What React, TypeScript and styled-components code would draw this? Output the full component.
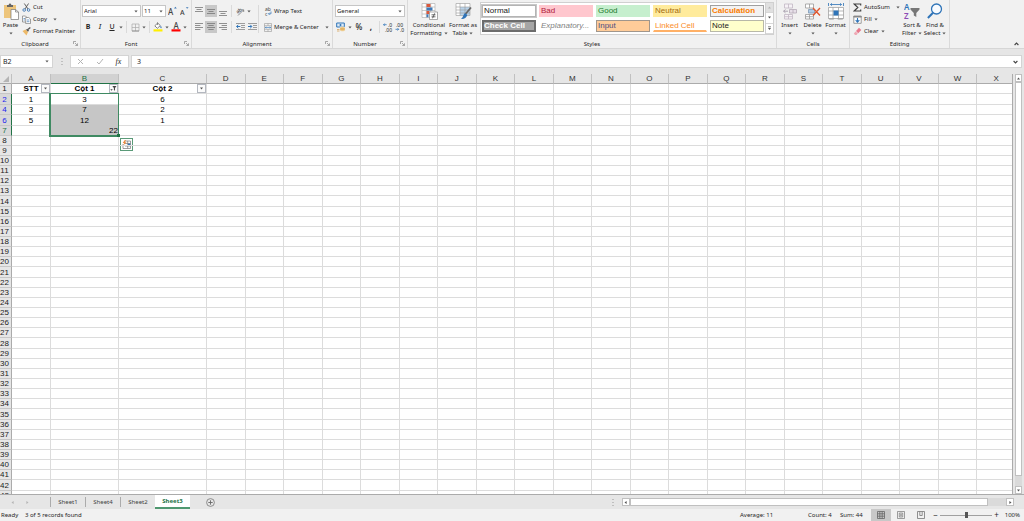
import React from "react";
import styled, { createGlobalStyle, css } from "styled-components";

const UI = `"Noto Sans", "Open Sans", sans-serif`;
const CELL = `"Liberation Sans", Arial, sans-serif`;
const GREEN = "#217346";

const GlobalStyle = createGlobalStyle`
  *, *::before, *::after { box-sizing: border-box; }
  body { margin: 0; background: #e6e6e6; }
  button, input, select { margin: 0; padding: 0; border: 0; background: none; color: inherit; font: inherit; outline: none; }
  svg { display: block; flex: none; }
`;

const Window = styled.main`
  display: flex;
  flex-direction: column;
  height: 100vh;
  overflow: hidden;
  background: #e6e6e6;
  color: #262626;
  font: 6px/8px ${UI};
  white-space: nowrap;
`;

/* ---------- ribbon ---------- */

const Ribbon = styled.header`
  display: flex;
  flex: none;
  background: #f1f1f1;
  border-bottom: 1px solid #d6d6d6;
`;

const GroupBox = styled.section<{ $width: number }>`
  display: flex;
  flex-direction: column;
  flex: none;
  width: ${(p) => p.$width}px;
  border-right: 1px solid #dadada;
`;

const GroupBody = styled.div<{ $pad: number }>`
  display: flex;
  align-items: flex-start;
  height: 39px;
  padding-left: ${(p) => p.$pad}px;
`;

const GroupFooter = styled.div`
  display: flex;
  align-items: center;
  height: 9px;
`;

const GroupTitle = styled.span`
  flex: 1;
  text-align: center;
`;

const Launcher = styled.button`
  display: grid;
  place-items: center;
  width: 10px;
  height: 8px;
`;

const BigButton = styled.button<{ $width: number }>`
  display: flex;
  flex-direction: column;
  align-items: center;
  flex: none;
  width: ${(p) => p.$width}px;
  padding-top: 3px;
  line-height: 8px;
  svg + span { margin-top: 1px; }
`;

const BigLine = styled.span`
  display: flex;
  align-items: center;
  justify-content: center;
  gap: 2px;
  height: 8px;
`;

const ActionList = styled.div<{ $width: number }>`
  display: flex;
  flex-direction: column;
  flex: none;
  width: ${(p) => p.$width}px;
  padding: 1px 0 0 2px;
`;

const Action = styled.button<{ $spread?: boolean }>`
  display: flex;
  align-items: center;
  gap: ${(p) => (p.$spread ? 6 : 2)}px;
  height: 12px;
`;

const ActionLabel = styled.span`
  display: flex;
  align-items: center;
  gap: 2px;
`;

const ToolRows = styled.div`
  display: flex;
  flex-direction: column;
  gap: 4px;
  padding-top: 5px;
`;

const ToolRow = styled.div`
  display: flex;
  align-items: center;
  height: 12px;
`;

const Tool = styled.button<{ $active?: boolean; $large?: boolean }>`
  display: grid;
  place-items: center;
  width: 12px;
  height: 12px;
  background: ${(p) => (p.$active ? "#c8c8c8" : "transparent")};
  font-size: ${(p) => (p.$large ? 8 : 7)}px;
  font-weight: 500;
`;

const CaretTool = styled.button`
  display: grid;
  place-items: center;
  width: 6px;
  height: 12px;
`;

const TextTool = styled.button<{ $gap: number }>`
  display: flex;
  align-items: center;
  gap: ${(p) => p.$gap}px;
  height: 12px;
`;

const Divider = styled.span<{ $tall?: boolean }>`
  flex: none;
  width: 1px;
  height: ${(p) => (p.$tall ? 28 : 12)}px;
  margin: ${(p) => (p.$tall ? "5px 5px 0 0" : "0 2px")};
  background: #dadada;
`;

const ComboBox = styled.label<{ $width: number }>`
  display: flex;
  align-items: center;
  width: ${(p) => p.$width}px;
  height: 12px;
  margin-right: 1px;
  padding-right: 2px;
  border: 1px solid #c6c6c6;
  background: #fff;
`;

const ComboSelect = styled.select`
  flex: 1;
  min-width: 0;
  height: 10px;
  padding-left: 1px;
  appearance: none;
  line-height: 10px;
`;

const Gallery = styled.div`
  display: flex;
  height: 33px;
  margin: 2px 0 0 1px;
  border: 1px solid #d0d0d0;
  background: #fff;
`;

const Swatches = styled.div`
  display: grid;
  grid-template-columns: repeat(5, 54px);
  grid-auto-rows: 12px;
  gap: 3px;
  padding: 2px 1px;
`;

type SwatchKind = "normal" | "bad" | "good" | "neutral" | "calc" | "check" | "explain" | "input" | "linked" | "note";

const swatchStyles: Record<SwatchKind, ReturnType<typeof css>> = {
  normal: css`color: #222; border-color: #b4b4b4; outline: 1px solid #c8c8c8;`,
  bad: css`color: #b0203a; background: #ffc7ce;`,
  good: css`color: #1c7a2c; background: #c6efce;`,
  neutral: css`color: #a36a10; background: #ffeb9c;`,
  calc: css`color: #fa7d00; background: #f2f2f2; border-color: #a0a0a0; font-weight: 700;`,
  check: css`color: #fff; background: #a5a5a5; border: 2px solid #6c6c6c; font-weight: 700; padding-left: 0; line-height: 8px;`,
  explain: css`color: #7f7f7f; font-style: italic;`,
  input: css`color: #4d4d80; background: #ffcc99; border-color: #a0968c;`,
  linked: css`color: #fa8c28; border-bottom: 2px solid #ffb066;`,
  note: css`color: #222; background: #ffffcc; border-color: #b8b8a8;`,
};

const Swatch = styled.button<{ $kind: SwatchKind }>`
  padding-left: 1px;
  border: 1px solid transparent;
  font: 8px/10px ${CELL};
  text-align: left;
  ${(p) => swatchStyles[p.$kind]}
`;

const GalleryScroll = styled.div`
  display: grid;
  grid-template-rows: repeat(3, 1fr);
  width: 8px;
  border-left: 1px solid #d0d0d0;
`;

const GalleryStep = styled.button<{ $dim?: boolean }>`
  display: grid;
  place-items: center;
  background: ${(p) => (p.$dim ? "#e0e0e0" : "#fff")};
  border-bottom: 1px solid #d8d8d8;
`;

const CollapseRibbon = styled.button`
  align-self: flex-end;
  margin: 0 5px 2px auto;
`;

/* ---------- formula bar ---------- */

const FormulaRow = styled.div`
  display: flex;
  align-items: center;
  flex: none;
  padding: 6px 2px 6px 0;
`;

const Field = styled.label<{ $width?: number }>`
  display: flex;
  align-items: center;
  flex: ${(p) => (p.$width ? "none" : 1)};
  width: ${(p) => (p.$width ? `${p.$width}px` : "auto")};
  height: 13px;
  padding: 0 3px 0 2px;
  border: 1px solid #d4d4d4;
  background: #fff;
  font-size: 7px;
`;

const FieldInput = styled.input<{ $indent?: boolean }>`
  flex: 1;
  min-width: 0;
  height: 11px;
  padding-left: ${(p) => (p.$indent ? 3 : 0)}px;
`;

const Grip = styled.span`
  display: grid;
  place-items: center;
  width: 17px;
`;

const EntryButtons = styled.div`
  display: flex;
  justify-content: space-around;
  align-items: center;
  width: 59px;
  height: 13px;
  margin-right: 2px;
  border: 1px solid #d4d4d4;
  background: #fff;
`;

const EntryButton = styled.button`
  display: grid;
  place-items: center;
  width: 14px;
  height: 11px;
  font: italic 400 8px/10px "Liberation Serif", serif;
`;

/* ---------- worksheet ---------- */

const SheetArea = styled.div`
  display: flex;
  flex: 1;
  min-height: 0;
`;

const GridView = styled.div`
  flex: 1;
  min-width: 0;
  overflow: hidden;
  background: #fff;
  border-right: 1px solid #ababab;
`;

const Grid = styled.table`
  width: calc(100% + 4px);
  table-layout: fixed;
  border-collapse: separate;
  border-spacing: 0;
  font: 8px/8px ${CELL};
  color: #000;
`;

const Col = styled.col<{ $width?: number }>`
  width: ${(p) => (p.$width ? `${p.$width}px` : "auto")};
`;

const ColHead = styled.th<{ $selected?: boolean }>`
  height: 10px;
  padding: 1px 0 0;
  background: ${(p) => (p.$selected ? "#d2d2d2" : "#e6e6e6")};
  border-right: 1px solid #c0c0c0;
  border-bottom: 1px solid ${(p) => (p.$selected ? GREEN : "#ababab")};
  color: ${(p) => (p.$selected ? GREEN : "#303030")};
  font-weight: 400;
`;

const Corner = styled.td`
  padding: 0 2px 0 0;
  background: #e6e6e6;
  border-right: 1px solid #c0c0c0;
  border-bottom: 1px solid #ababab;
  svg { margin-left: auto; }
`;

const Row = styled.tr<{ $tall: boolean }>`
  height: ${(p) => (p.$tall ? 11 : 10)}px;
`;

const RowHead = styled.th<{ $selected: boolean; $filtered: boolean }>`
  padding: 1px 2px 0 0;
  background: ${(p) => (p.$selected ? "#d8d8d8" : "#e6e6e6")};
  border-right: 1px solid ${(p) => (p.$selected ? GREEN : "#ababab")};
  border-bottom: 1px solid #c6c6c6;
  color: ${(p) => (p.$filtered ? "#2222ee" : p.$selected ? GREEN : "#222")};
  font-weight: 400;
`;

const Cell = styled.td<{ $bold?: boolean; $right?: boolean; $shaded?: boolean }>`
  position: relative;
  padding: 1px 0 0;
  border-right: 1px solid #dcdcdc;
  border-bottom: 1px solid #dcdcdc;
  background: ${(p) => (p.$shaded ? "#c6c6c6" : "transparent")};
  ${(p) => p.$shaded && "border-color: #c6c6c6;"}
  font-weight: ${(p) => (p.$bold ? 700 : 400)};
  text-align: ${(p) => (p.$right ? "right" : "center")};
`;

const FilterButton = styled.button`
  position: absolute;
  right: 0;
  bottom: 0;
  display: grid;
  place-items: center;
  width: 9px;
  height: 9px;
  border: 1px solid #b4b8c0;
  background: #fbfbfb;
`;

const Selection = styled.div`
  position: absolute;
  z-index: 1;
  top: -1px;
  left: -2px;
  right: -1px;
  height: 44px;
  border: 2px solid #3f8a62;
  border-top-width: 1px;
  border-right-width: 1px;
  pointer-events: none;
  &::after {
    content: "";
    position: absolute;
    right: -2px;
    bottom: -2px;
    width: 3px;
    height: 3px;
    background: ${GREEN};
  }
`;

const QuickAnalysis = styled.button`
  position: absolute;
  top: 44px;
  left: 69px;
  display: grid;
  place-items: center;
  width: 13px;
  height: 13px;
  border: 1px solid #5a9a78;
  background: #fff;
`;

const VScroll = styled.div`
  display: flex;
  flex-direction: column;
  width: 7px;
  margin: 0 2px;
  background: #dadada;
`;

const HScroll = styled.div`
  display: flex;
  align-items: stretch;
  width: calc(38% + 3px);
  height: 8px;
  margin-right: 10px;
  background: #dadada;
`;

const ScrollArrow = styled.button`
  display: grid;
  place-items: center;
  flex: none;
  width: 8px;
  height: 8px;
  border: 1px solid #c0c0c0;
  background: #fff;
  ${VScroll} & { width: 7px; }
`;

const ScrollThumb = styled.div<{ $gap: number }>`
  flex: 1;
  border: 1px solid #c0c0c0;
  background: #fff;
  ${HScroll} & { margin-right: ${(p) => p.$gap}px; }
  ${VScroll} & { margin-bottom: ${(p) => p.$gap}px; }
`;

/* ---------- tabs and status ---------- */

const TabBar = styled.nav`
  display: flex;
  align-items: center;
  flex: none;
  height: 15px;
  border-top: 1px solid #ababab;
`;

const TabArrows = styled.div`
  display: flex;
  gap: 10px;
  width: 50px;
  padding-left: 10px;
`;

const Tab = styled.button<{ $active: boolean }>`
  width: 35px;
  height: 10px;
  border-left: 1px solid #ababab;
  color: #444;
  ${(p) =>
    p.$active &&
    css`
      align-self: flex-start;
      height: 14px;
      border-left: 0;
      border-bottom: 2px solid #4f9870;
      background: #fff;
      color: ${GREEN};
      font-weight: 700;
    `}
`;

const NewSheet = styled.button`
  margin: 0 auto 0 16px;
`;

const StatusBar = styled.footer`
  display: flex;
  align-items: center;
  flex: none;
  height: 12px;
  padding: 0 4px 0 1px;
  background: #f1f1f1;
`;

const Status = styled.span<{ $width: number }>`
  width: ${(p) => p.$width}px;
`;

const StatusRight = styled.div`
  display: flex;
  align-items: center;
  margin-left: auto;
`;

const ViewButton = styled.button<{ $active?: boolean }>`
  display: grid;
  place-items: center;
  width: 20px;
  height: 12px;
  background: ${(p) => (p.$active ? "#c8c8c8" : "transparent")};
`;

const ZoomStep = styled.button`
  width: 9px;
  font-size: 8px;
`;

const ZoomSlider = styled.input`
  width: 52px;
  height: 8px;
  appearance: none;
  background: linear-gradient(#a0a0a0, #a0a0a0) center / 100% 1px no-repeat;
  &::-webkit-slider-thumb {
    appearance: none;
    width: 3px;
    height: 6px;
    background: #555;
  }
`;

const ZoomValue = styled.span`
  width: 19px;
  text-align: right;
`;

/* ---------- icons ---------- */

type IconProps = { w: number; h?: number; children: React.ReactNode };
const Icon = ({ w, h = w, children }: IconProps) => (
  <svg width={w} height={h} viewBox={`0 0 ${w} ${h}`} fill="none" aria-hidden="true">
    {children}
  </svg>
);

const Caret = () => <Icon w={4} h={3}><path d="M.4 .5h3.2L2 2.4z" fill="#555" /></Icon>;
const Chevron = ({ up }: { up?: boolean }) => (
  <Icon w={5} h={4}><path d={up ? "M.6 3 2.5 1 4.4 3" : "M.6 1 2.5 3 4.4 1"} stroke="#444" strokeWidth="1.1" /></Icon>
);

const PasteIcon = () => (
  <Icon w={16} h={17}>
    <path d="M1 2h12v13H1z" fill="#edc57c" />
    <path d="M4 4V2h1.700C5.700 0 8.300 0 8.300 2H10v2z" fill="#666" />
    <path d="M8 6.500h4.500L15.500 9v7.500H8z" fill="#fff" stroke="#777" strokeWidth=".7" />
    <path d="M12.500 6.500V9h3" stroke="#777" strokeWidth=".7" />
  </Icon>
);
const CutIcon = () => (
  <Icon w={9}>
    <path d="M2.300 .5 6 6M6.500 .5 3 6" stroke="#555" strokeWidth=".9" />
    <circle cx="2.200" cy="7" r="1.300" stroke="#3f78b5" strokeWidth=".9" />
    <circle cx="6.600" cy="7" r="1.300" stroke="#3f78b5" strokeWidth=".9" />
  </Icon>
);
const CopyIcon = () => (
  <Icon w={9}>
    <path d="M.5 1h3l1.500 1.500V7H.5z" fill="#fff" stroke="#777" strokeWidth=".7" />
    <path d="M3.700 2.500h3L8.500 4v4.600H3.700z" fill="#fff" stroke="#777" strokeWidth=".7" />
    <path d="M1.500 3.500h1.500M1.500 5h1.500M4.800 5h2.600M4.800 6.700h2.600" stroke="#3f78b5" strokeWidth=".7" />
  </Icon>
);
const BrushIcon = () => (
  <Icon w={9}>
    <path d="M.5 4 3.500 2.500 6 5 4.500 8.500z" fill="#edb968" />
    <path d="M4 2.800 5.300 1.700 7 3.400 6 4.800z" fill="#555" />
    <path d="M6 2.600 8.300.5" stroke="#555" strokeWidth="1.300" />
  </Icon>
);
const LaunchIcon = () => (
  <Icon w={5}>
    <path d="M.5 3V.5H3M2 2l2.300 2.300M4.500 2.300v2.200H2.300" stroke="#777" strokeWidth=".6" />
  </Icon>
);
const GrowIcon = ({ shrink }: { shrink?: boolean }) => (
  <Icon w={10}>
    <text x="0" y="9" fontFamily="Noto Sans" fontSize={shrink ? 7 : 8} fontWeight="500" fill="#444">A</text>
    <path d={shrink ? "M5.800 1.200h2.800L7.200 2.800z" : "M6 2.600h2.800L7.400 .8z"} fill="#3f78b5" />
  </Icon>
);
const BordersIcon = () => (
  <Icon w={9}>
    <path d="M1 1h7v7H1zM4.500 1v7M1 4.500h7" stroke="#aaa" strokeWidth=".7" />
    <path d="M1 8h7" stroke="#888" strokeWidth=".8" />
  </Icon>
);
const FillColorIcon = () => (
  <Icon w={10}>
    <path d="M1.800 3.800 4.700 1 7.300 3.600 4.300 6.300z" fill="#fff" stroke="#666" strokeWidth=".8" />
    <path d="M4.500 3V.5" stroke="#666" strokeWidth=".7" />
    <path d="M7.700 3.500c1 1.500 1.300 2.700.4 2.700s-.9-1.200-.4-2.700" fill="#3f78b5" />
    <path d="M.5 7.300h9v2.200h-9z" fill="#ffef00" />
  </Icon>
);
const FontColorIcon = () => (
  <Icon w={10}>
    <text x="2.500" y="6.500" fontFamily="Noto Sans" fontSize="8" fontWeight="500" fill="#444">A</text>
    <path d="M.5 7.300h9v2.200h-9z" fill="#f00" />
  </Icon>
);
const VAlignIcon = ({ top }: { top: number }) => (
  <Icon w={8} h={10}>
    <path d={`M0 ${top + 0.5}h8M1.500 ${top + 2.5}h5M0 ${top + 4.5}h8`} stroke="#777" strokeWidth=".8" />
  </Icon>
);
const HAlignIcon = ({ side }: { side: 0 | 1 | 2 }) => (
  <Icon w={8} h={8}>
    <path d={`M0 .5h8M${side * 1.3} 2.500h5.400M0 4.500h8M${side * 1.3} 6.500h5.400`} stroke="#777" strokeWidth=".8" />
  </Icon>
);
const OrientIcon = () => (
  <Icon w={10}>
    <text x="1" y="7" fontFamily="Noto Sans" fontSize="5" fill="#444" transform="rotate(-35 3 5)">ab</text>
    <path d="M3 9.500 8.500 4M6.500 3.800h2.200v2.200" stroke="#777" strokeWidth=".8" />
  </Icon>
);
const IndentIcon = ({ out }: { out?: boolean }) => (
  <Icon w={9} h={8}>
    <path d="M0 .5h9M5 2.500h4M5 4.500h4M0 6.500h9" stroke="#888" strokeWidth=".8" />
    <path d={out ? "M4.300 3.500H.7M2.300 1.800.6 3.500l1.700 1.700" : "M0 3.500h3.600M2.200 1.800l1.700 1.700-1.700 1.700"} stroke="#2f74b8" strokeWidth="1" />
  </Icon>
);
const WrapIcon = () => (
  <Icon w={8} h={9}>
    <text x="1" y="4.200" fontFamily="Noto Sans" fontSize="5" fill="#444">ab</text>
    <text x="1" y="8.500" fontFamily="Noto Sans" fontSize="5" fill="#444">c</text>
    <path d="M7 4.500v2.300H4.600M5.600 5.700 4.500 6.800l1.100 1.100" stroke="#2f74b8" strokeWidth=".7" />
  </Icon>
);
const MergeIcon = () => (
  <Icon w={8} h={9}>
    <path d="M.5.5h7v8h-7zM.5 2.700h7M.5 6.300h7M4 .5v2.200M4 6.300v2.200" stroke="#999" strokeWidth=".6" />
    <path d="M1.300 4.500h5.400M2.300 3.700l-1 .8 1 .8M5.700 3.700l1 .8-1 .8" stroke="#2f74b8" strokeWidth=".6" />
  </Icon>
);
const CurrencyIcon = () => (
  <Icon w={10}>
    <path d="M.7 1h7.600v4H.7z" fill="#dbe9f6" stroke="#2f74b8" strokeWidth="1" />
    <circle cx="4.500" cy="3" r="1" fill="#2f74b8" />
    <path d="M4 5.500c0-1 5-1 5 0v3c0 1-5 1-5 0z" fill="#edc57c" stroke="#f1f1f1" strokeWidth=".5" />
    <path d="M1 7.500h2.500M1 9h2.500M4 7h5" stroke="#d29a45" strokeWidth=".7" />
  </Icon>
);
const DecimalIcon = ({ more }: { more?: boolean }) => (
  <Icon w={10} h={10}>
    <path d={more ? "M3.600 2.700H.6M1.700 1.500.5 2.700l1.200 1.200" : "M.5 7.300h3M2.500 6.100l1.200 1.200-1.200 1.200"} stroke="#2f74b8" strokeWidth=".8" />
    <text x={more ? 5 : 1} y="4.700" fontFamily="Noto Sans" fontSize="5" fill="#555">{more ? ".0" : ".00"}</text>
    <text x={more ? 2 : 5} y="9.500" fontFamily="Noto Sans" fontSize="5" fill="#555">{more ? ".00" : ".0"}</text>
  </Icon>
);
const ConditionalIcon = () => (
  <Icon w={17}>
    <path d="M1 .5h13v14H1zM1 4h13M1 7.500h13M1 11h13M5.300.5v14M9.700.5v14" fill="#fff" stroke="#a8a8a8" strokeWidth=".6" />
    <path d="M5.500 1h4v3h-4zM5.500 8h3v3h-3z" fill="#d9573b" />
    <path d="M5.500 4.500h6v3h-6zM5.500 11.300h2v3h-2z" fill="#3f78b5" />
    <path d="M8.500 9h8v7.500h-8z" fill="#fff" stroke="#777" strokeWidth=".6" />
    <path d="M10.500 11.800h4M10.500 13.800h4M13.700 10.300l-2.200 5" stroke="#333" strokeWidth=".7" />
  </Icon>
);
const FormatTableIcon = () => (
  <Icon w={17}>
    <path d="M1 .5h14v12H1z" fill="#fff" />
    <path d="M5 4h10v8.500H5z" fill="#b9d3ea" />
    <path d="M1 .5h14v12H1zM1 4h14M1 7h14M1 10h14M5 .5v12M10 .5v12" stroke="#999" strokeWidth=".6" />
    <path d="M16 4.500 10.500 11" stroke="#666" strokeWidth="1.800" />
    <path d="M10 10l2.300 2c-1 3-3 4.300-6.300 4 2-1 2-4.500 4-6z" fill="#2f74b8" />
  </Icon>
);
const InsertIcon = () => (
  <Icon w={16} h={17}>
    <path d="M2.500 1h8v4h-8zM6.500 1v4M2.500 11.500h8v4.500h-8zM6.500 11.500V16M2.500 13.700h8" fill="#f6f2f6" stroke="#c2b8c4" strokeWidth=".8" />
    <path d="M7.500 6.500h7v3.500h-7zM11 6.500V10" fill="#e6dfe8" stroke="#b5a9b8" strokeWidth=".8" />
    <path d="M6 8.200H1.500M3.500 6.500 1.600 8.200l1.900 1.700" stroke="#a79dad" strokeWidth=".9" />
  </Icon>
);
const DeleteIcon = () => (
  <Icon w={17}>
    <path d="M1.500 1h8v4h-8zM5.500 1v4M1.500 11.500h8V16h-8zM5.500 11.500V16M1.500 13.700h8" fill="#fff" stroke="#999" strokeWidth=".8" />
    <path d="M4.500 6.500h6V10h-6z" fill="#aecbe6" stroke="#7d99b5" strokeWidth=".8" />
    <path d="M9 5l7 7.500M16 5 9 12.500" stroke="#e0572f" strokeWidth="1.400" />
  </Icon>
);
const FormatIcon = () => (
  <Icon w={16} h={17}>
    <path d="M2.500 1.500h11M4 .3 2.500 1.500 4 2.700M12 .3l1.500 1.200L12 2.700M.5 0v3M15.500 0v3" stroke="#2f74b8" strokeWidth=".8" />
    <path d="M.5 4.500h15v11H.5zM.5 8h15M.5 12h15M5 4.500v11M10.500 4.500v11" fill="#fff" stroke="#999" strokeWidth=".7" />
    <path d="M5.500 7.500h5v5h-5z" fill="#2f74b8" />
    <path d="M.5 15.500h6l-1 1h-4zM9 15.500h6.500l-1 1H10z" fill="#999" />
  </Icon>
);
const SigmaIcon = () => (
  <Icon w={9}><path d="M7.700 2.500V1H1.200L4.800 4.500 1.200 8h6.500V6.500" stroke="#444" strokeWidth="1.200" /></Icon>
);
const FillIcon = () => (
  <Icon w={9}>
    <path d="M.8 1h7.400v7.300H.8z" fill="#fff" stroke="#777" strokeWidth=".7" />
    <path d="M.5 1h8v1.500h-8z" fill="#888" />
    <path d="M4.500 3v4M2.700 5.200l1.800 1.900 1.800-1.900" stroke="#2f74b8" strokeWidth="1.100" />
  </Icon>
);
const EraserIcon = () => (
  <Icon w={9}>
    <path d="M3 4 6 .8 8.300 3 5.200 6.200z" fill="#e8788c" />
    <path d="M2.600 4.400 4.800 6.600 3.500 8H2L.8 6.500z" fill="#efa9b5" />
  </Icon>
);
const SortIcon = () => (
  <Icon w={16} h={17}>
    <text x="0" y="7" fontFamily="Noto Sans" fontSize="8" fontWeight="600" fill="#2f74b8">A</text>
    <text x="0" y="16" fontFamily="Noto Sans" fontSize="8" fontWeight="600" fill="#8d4bb5">Z</text>
    <path d="M6.500 5h9v1.500L12.300 10v4l-2.500-1.500V10L6.500 6.500z" fill="#777" />
  </Icon>
);
const FindIcon = () => (
  <Icon w={16} h={17}>
    <circle cx="9.500" cy="6" r="5" fill="#f8fbff" stroke="#2f74b8" strokeWidth="1.300" />
    <path d="M6 9.700.9 15" stroke="#2f74b8" strokeWidth="2" />
  </Icon>
);
const QuickIcon = () => (
  <Icon w={9}>
    <path d="M3 1h5.500v7.500H1V4" fill="#fff" stroke="#777" strokeWidth=".7" />
    <path d="M3 3.500h5.500M3 6h5.500M5.700 1v7.500" stroke="#777" strokeWidth=".7" />
    <path d="M6 3.700h2.300v2H6z" fill="#2f74b8" />
    <path d="M2.800 0 .7 3h1.500L1 5.800 4.500 2.200H2.800L4 0z" fill="#eb8a3c" />
  </Icon>
);
const FunnelIcon = () => (
  <Icon w={7}><path d="M2.300 1h4.200L5 3v2.800L3.900 5V3z" fill="#444" /><path d="M.3 4.300h2.400L1.500 5.700z" fill="#444" /></Icon>
);
const Triangle = ({ turn, dim }: { turn: number; dim?: boolean }) => (
  <Icon w={5}><path d="M1 3.600h3L2.500 1.500z" fill={dim ? "#b5b5b5" : "#555"} transform={`rotate(${turn} 2.500 2.500)`} /></Icon>
);
const Dots = () => (
  <Icon w={2} h={7}><path d="M0.500 .5h1M.5 3.500h1M.5 6.500h1" stroke="#999" /></Icon>
);

/* ---------- pieces ---------- */

const Group = ({ title, width, pad = 1, launcher, children }: {
  title: string; width: number; pad?: number; launcher?: boolean; children: React.ReactNode;
}) => (
  <GroupBox $width={width} aria-label={title}>
    <GroupBody $pad={pad}>{children}</GroupBody>
    <GroupFooter>
      <GroupTitle>{title}</GroupTitle>
      {launcher && <Launcher aria-label={`${title} settings`}><LaunchIcon /></Launcher>}
    </GroupFooter>
  </GroupBox>
);

const Combo = ({ label, value, width }: { label: string; value: string; width: number }) => (
  <ComboBox $width={width}>
    <ComboSelect aria-label={label} defaultValue={value}><option>{value}</option></ComboSelect>
    <Caret />
  </ComboBox>
);

const Drop = ({ label }: { label: string }) => <CaretTool aria-label={label}><Caret /></CaretTool>;

const swatches: [SwatchKind, string][] = [
  ["normal", "Normal"], ["bad", "Bad"], ["good", "Good"], ["neutral", "Neutral"], ["calc", "Calculation"],
  ["check", "Check Cell"], ["explain", "Explanatory..."], ["input", "Input"], ["linked", "Linked Cell"], ["note", "Note"],
];

const columns = "ABCDEFGHIJKLMNOPQRSTUVWX".split("");
const fixedWidths: Record<string, number> = { A: 39, B: 68, C: 88 };
const rowNumbers = [1, 2, 4, 6, ...Array.from({ length: 37 }, (_, i) => i + 7)];
const data: Record<string, string> = {
  A1: "STT", B1: "Cột 1", C1: "Cột 2",
  A2: "1", B2: "3", C2: "6",
  A4: "3", B4: "7", C4: "2",
  A6: "5", B6: "12", C6: "1",
  B7: "22",
};
const filteredRows = [2, 4, 6];
const selectedRows = [2, 4, 6, 7];
const isTall = (n: number) => n === 2 || n === 6 || (n > 7 && (n - 7) % 7 === 0);

const Worksheet = () => (
  <GridView>
    <Grid>
      <colgroup>
        <Col $width={12} />
        {columns.map((c) => <Col key={c} $width={fixedWidths[c]} />)}
      </colgroup>
      <thead>
        <tr>
          <Corner><Icon w={6}><path d="M6 0v6H0z" fill="#b4b4b4" /></Icon></Corner>
          {columns.map((c) => <ColHead key={c} scope="col" $selected={c === "B"}>{c}</ColHead>)}
        </tr>
      </thead>
      <tbody>
        {rowNumbers.map((n) => (
          <Row key={n} $tall={isTall(n)}>
            <RowHead scope="row" $selected={selectedRows.includes(n)} $filtered={filteredRows.includes(n)}>{n}</RowHead>
            {columns.map((c) => {
              const id = `${c}${n}`;
              return (
                <Cell key={c} $bold={n === 1} $right={id === "B7"} $shaded={c === "B" && [4, 6, 7].includes(n)}>
                  {data[id]}
                  {n === 1 && data[id] && (
                    <FilterButton aria-label={`Filter ${data[id]}`}>
                      {c === "B" ? <FunnelIcon /> : <Triangle turn={180} />}
                    </FilterButton>
                  )}
                  {id === "B2" && <Selection />}
                  {id === "B2" && <QuickAnalysis aria-label="Quick analysis"><QuickIcon /></QuickAnalysis>}
                </Cell>
              );
            })}
          </Row>
        ))}
      </tbody>
    </Grid>
  </GridView>
);

export default function App() {
  return (
    <Window>
      <GlobalStyle />
      <Ribbon>
        <Group title="Clipboard" width={81} launcher>
          <BigButton $width={19}>
            <PasteIcon />
            <BigLine>Paste</BigLine>
            <BigLine><Caret /></BigLine>
          </BigButton>
          <ActionList $width={58}>
            <Action><CutIcon />Cut</Action>
            <Action $spread><ActionLabel><CopyIcon />Copy</ActionLabel><Caret /></Action>
            <Action><BrushIcon />Format Painter</Action>
          </ActionList>
        </Group>

        <Group title="Font" width={111} launcher>
          <ToolRows>
            <ToolRow>
              <Combo label="Font" value="Arial" width={59} />
              <Combo label="Font size" value="11" width={24} />
              <Tool aria-label="Increase font size"><GrowIcon /></Tool>
              <Tool aria-label="Decrease font size"><GrowIcon shrink /></Tool>
            </ToolRow>
            <ToolRow>
              <Tool><b>B</b></Tool>
              <Tool><i>I</i></Tool>
              <Tool><u>U</u></Tool>
              <Drop label="Underline style" />
              <Divider />
              <Tool aria-label="Borders"><BordersIcon /></Tool>
              <Drop label="Border style" />
              <Divider />
              <Tool aria-label="Fill colour"><FillColorIcon /></Tool>
              <Drop label="Fill colours" />
              <Tool aria-label="Font colour"><FontColorIcon /></Tool>
              <Drop label="Font colours" />
            </ToolRow>
          </ToolRows>
        </Group>

        <Group title="Alignment" width={141} launcher>
          <ToolRows>
            <ToolRow>
              <Tool aria-label="Top align"><VAlignIcon top={1} /></Tool>
              <Tool aria-label="Middle align" $active><VAlignIcon top={3} /></Tool>
              <Tool aria-label="Bottom align"><VAlignIcon top={5} /></Tool>
              <Divider />
              <Tool aria-label="Orientation"><OrientIcon /></Tool>
              <Drop label="Orientations" />
            </ToolRow>
            <ToolRow>
              <Tool aria-label="Align left"><HAlignIcon side={0} /></Tool>
              <Tool aria-label="Centre" $active><HAlignIcon side={1} /></Tool>
              <Tool aria-label="Align right"><HAlignIcon side={2} /></Tool>
              <Divider />
              <Tool aria-label="Decrease indent"><IndentIcon out /></Tool>
              <Tool aria-label="Increase indent"><IndentIcon /></Tool>
            </ToolRow>
          </ToolRows>
          <Divider $tall />
          <ToolRows>
            <TextTool $gap={2}><WrapIcon />Wrap Text</TextTool>
            <TextTool $gap={6}><ActionLabel><MergeIcon />Merge &amp; Center</ActionLabel><Caret /></TextTool>
          </ToolRows>
        </Group>

        <Group title="Number" width={75} pad={2} launcher>
          <ToolRows>
            <ToolRow><Combo label="Number format" value="General" width={70} /></ToolRow>
            <ToolRow>
              <Tool aria-label="Accounting format"><CurrencyIcon /></Tool>
              <Drop label="Currencies" />
              <Tool $large>%</Tool>
              <Tool $large><b>,</b></Tool>
              <Divider />
              <Tool aria-label="Increase decimal"><DecimalIcon more /></Tool>
              <Tool aria-label="Decrease decimal"><DecimalIcon /></Tool>
            </ToolRow>
          </ToolRows>
        </Group>

        <Group title="Styles" width={369} pad={3}>
          <BigButton $width={36}>
            <ConditionalIcon />
            <BigLine>Conditional</BigLine>
            <BigLine>Formatting<Caret /></BigLine>
          </BigButton>
          <BigButton $width={32}>
            <FormatTableIcon />
            <BigLine>Format as</BigLine>
            <BigLine>Table<Caret /></BigLine>
          </BigButton>
          <Gallery>
            <Swatches>
              {swatches.map(([kind, name]) => <Swatch key={kind} $kind={kind}>{name}</Swatch>)}
            </Swatches>
            <GalleryScroll>
              <GalleryStep aria-label="Previous styles" $dim><Triangle turn={0} dim /></GalleryStep>
              <GalleryStep aria-label="Next styles"><Triangle turn={180} /></GalleryStep>
              <GalleryStep aria-label="All styles">
                <Icon w={5}><path d="M1 .8h3" stroke="#555" strokeWidth=".7" /><path d="M1 2h3L2.500 4z" fill="#555" /></Icon>
              </GalleryStep>
            </GalleryScroll>
          </Gallery>
        </Group>

        <Group title="Cells" width={73}>
          <BigButton $width={23}><InsertIcon /><BigLine>Insert</BigLine><BigLine><Caret /></BigLine></BigButton>
          <BigButton $width={23}><DeleteIcon /><BigLine>Delete</BigLine><BigLine><Caret /></BigLine></BigButton>
          <BigButton $width={23}><FormatIcon /><BigLine>Format</BigLine><BigLine><Caret /></BigLine></BigButton>
        </Group>

        <Group title="Editing" width={100}>
          <ActionList $width={50}>
            <Action $spread><ActionLabel><SigmaIcon />AutoSum</ActionLabel><Caret /></Action>
            <Action><FillIcon />Fill<Caret /></Action>
            <Action><EraserIcon />Clear<Caret /></Action>
          </ActionList>
          <BigButton $width={22}>
            <SortIcon />
            <BigLine>Sort &amp;</BigLine>
            <BigLine>Filter<Caret /></BigLine>
          </BigButton>
          <BigButton $width={24}>
            <FindIcon />
            <BigLine>Find &amp;</BigLine>
            <BigLine>Select<Caret /></BigLine>
          </BigButton>
        </Group>
        <CollapseRibbon aria-label="Collapse ribbon"><Chevron up /></CollapseRibbon>
      </Ribbon>

      <FormulaRow>
        <Field $width={53}>
          <FieldInput aria-label="Name box" defaultValue="B2" />
          <Caret />
        </Field>
        <Grip><Dots /></Grip>
        <EntryButtons>
          <EntryButton aria-label="Cancel"><Icon w={7}><path d="M1 1l5 5M6 1 1 6" stroke="#b4b4b4" /></Icon></EntryButton>
          <EntryButton aria-label="Enter"><Icon w={8} h={7}><path d="M1 4l2 2 4-5" stroke="#b4b4b4" /></Icon></EntryButton>
          <EntryButton>fx</EntryButton>
        </EntryButtons>
        <Field>
          <FieldInput aria-label="Formula" defaultValue="3" $indent />
          <Chevron />
        </Field>
      </FormulaRow>

      <SheetArea>
        <Worksheet />
        <VScroll>
          <ScrollArrow aria-label="Scroll up"><Triangle turn={0} /></ScrollArrow>
          <ScrollThumb $gap={10} />
          <ScrollArrow aria-label="Scroll down"><Triangle turn={180} /></ScrollArrow>
        </VScroll>
      </SheetArea>

      <TabBar>
        <TabArrows>
          <Triangle turn={270} dim />
          <Triangle turn={90} dim />
        </TabArrows>
        {["Sheet1", "Sheet4", "Sheet2", "Sheet3"].map((s) => <Tab key={s} $active={s === "Sheet3"}>{s}</Tab>)}
        <NewSheet aria-label="New sheet">
          <Icon w={9}><circle cx="4.500" cy="4.500" r="3.900" stroke="#777" strokeWidth=".8" /><path d="M4.500 2.300v4.400M2.300 4.500h4.400" stroke="#666" strokeWidth=".9" /></Icon>
        </NewSheet>
        <Grip><Dots /></Grip>
        <HScroll>
          <ScrollArrow aria-label="Scroll left"><Triangle turn={270} /></ScrollArrow>
          <ScrollThumb $gap={18} />
          <ScrollArrow aria-label="Scroll right"><Triangle turn={90} /></ScrollArrow>
        </HScroll>
      </TabBar>

      <StatusBar>
        <Status $width={24}>Ready</Status>
        <span>3 of 5 records found</span>
        <StatusRight>
          <Status $width={68}>Average: 11</Status>
          <Status $width={32}>Count: 4</Status>
          <Status $width={31}>Sum: 44</Status>
          <ViewButton aria-label="Normal view" $active>
            <Icon w={8}><path d="M.5.5h7v7h-7zM.5 2.800h7M.5 5.200h7M2.800.5v7M5.200.5v7" stroke="#666" strokeWidth=".8" /></Icon>
          </ViewButton>
          <ViewButton aria-label="Page layout">
            <Icon w={8}><path d="M.5.5h7v7h-7zM2.300 2h3.400v4H2.300zM3 3.300h2M3 4.700h2" stroke="#777" strokeWidth=".7" /></Icon>
          </ViewButton>
          <ViewButton aria-label="Page break preview">
            <Icon w={8}><path d="M.5.5h7v7h-7zM2.800.5v4h2.400v-4" stroke="#777" strokeWidth=".8" /></Icon>
          </ViewButton>
          <ZoomStep aria-label="Zoom out">−</ZoomStep>
          <ZoomSlider type="range" min={0} max={100} defaultValue={50} aria-label="Zoom" />
          <ZoomStep aria-label="Zoom in">+</ZoomStep>
          <ZoomValue>100%</ZoomValue>
        </StatusRight>
      </StatusBar>
    </Window>
  );
}
